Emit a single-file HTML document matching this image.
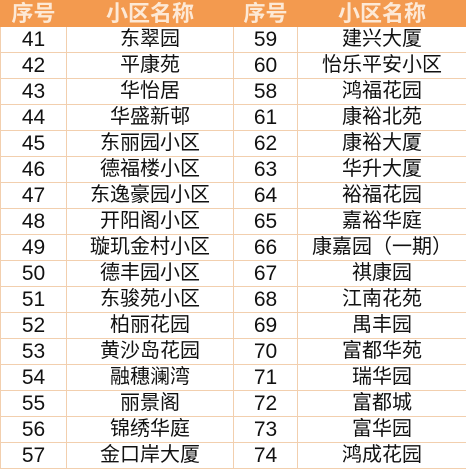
<html><head><style>
body{margin:0;width:466px;height:472px;background:#fff;overflow:hidden}
table{border-collapse:collapse;table-layout:fixed;width:466px;font-family:"Liberation Sans","Noto Sans CJK SC",sans-serif;font-size:20px;color:#111}
td,th{border:1px solid #f2cfae;text-align:center;padding:0;height:25px;line-height:25px;white-space:nowrap}
td:nth-child(odd){font-size:21px}
th{background:#f39a4f;color:#fde9d6;font-weight:bold;font-size:22px;height:25px;border-color:#f39a4f}
</style></head><body>
<table>
<colgroup><col style="width:66px"><col style="width:167px"><col style="width:64px"><col style="width:169px"></colgroup>
<tr><th>序号</th><th>小区名称</th><th>序号</th><th>小区名称</th></tr>
<tr><td>41</td><td>东翠园</td><td>59</td><td>建兴大厦</td></tr>
<tr><td>42</td><td>平康苑</td><td>60</td><td>怡乐平安小区</td></tr>
<tr><td>43</td><td>华怡居</td><td>58</td><td>鸿福花园</td></tr>
<tr><td>44</td><td>华盛新邨</td><td>61</td><td>康裕北苑</td></tr>
<tr><td>45</td><td>东丽园小区</td><td>62</td><td>康裕大厦</td></tr>
<tr><td>46</td><td>德福楼小区</td><td>63</td><td>华升大厦</td></tr>
<tr><td>47</td><td>东逸豪园小区</td><td>64</td><td>裕福花园</td></tr>
<tr><td>48</td><td>开阳阁小区</td><td>65</td><td>嘉裕华庭</td></tr>
<tr><td>49</td><td>璇玑金村小区</td><td>66</td><td>康嘉园（一期）</td></tr>
<tr><td>50</td><td>德丰园小区</td><td>67</td><td>祺康园</td></tr>
<tr><td>51</td><td>东骏苑小区</td><td>68</td><td>江南花苑</td></tr>
<tr><td>52</td><td>柏丽花园</td><td>69</td><td>禺丰园</td></tr>
<tr><td>53</td><td>黄沙岛花园</td><td>70</td><td>富都华苑</td></tr>
<tr><td>54</td><td>融穗澜湾</td><td>71</td><td>瑞华园</td></tr>
<tr><td>55</td><td>丽景阁</td><td>72</td><td>富都城</td></tr>
<tr><td>56</td><td>锦绣华庭</td><td>73</td><td>富华园</td></tr>
<tr><td>57</td><td>金口岸大厦</td><td>74</td><td>鸿成花园</td></tr>
</table></body></html>
